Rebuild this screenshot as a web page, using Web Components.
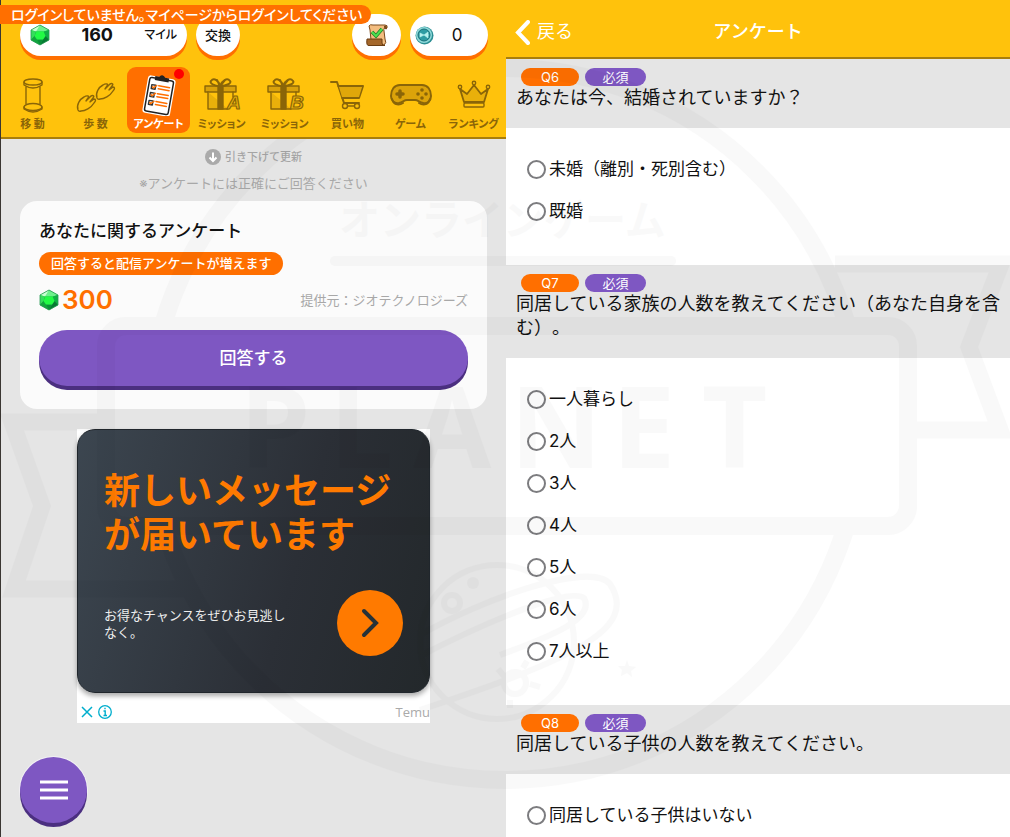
<!DOCTYPE html>
<html lang="ja">
<head>
<meta charset="utf-8">
<title>アンケート</title>
<style>
html,body{margin:0;padding:0}
body{font-family:Inter,"Noto Sans CJK JP",sans-serif;color:#111;background:#fff;text-spacing-trim:space-all;--yellow:#ffc20c;--edge:#a87e0c;--orange:#ff6f00;--purple:#7e57c2;--purple-dark:#4b2f80;--grey:#e5e5e5}
</style>
</head>
<body>
<survey-app></survey-app>

<template id="t-app">
<style>
:host{display:grid;grid-template-columns:506fr 504fr;position:relative;min-height:100vh;overflow:hidden}
.home{background:var(--grey);border-left:1px solid #3a3632;display:flex;flex-direction:column;min-width:0}
.form{background:#fff;min-width:0}
</style>
<section class="home">
  <home-header></home-header>
  <home-body></home-body>
</section>
<section class="form">
  <form-header>アンケート</form-header>
  <question-block number="Q6" options="未婚（離別・死別含む）|既婚">あなたは今、結婚されていますか？</question-block>
  <question-block number="Q7" options="一人暮らし|2人|3人|4人|5人|6人|7人以上">同居している家族の人数を教えてください（あなた自身を含む）。</question-block>
  <question-block number="Q8" options="同居している子供はいない" last>同居している子供の人数を教えてください。</question-block>
</section>
<brand-watermark></brand-watermark>
</template>

<template id="t-gem">
<style>:host{display:block;width:20px;height:22px}svg{display:block;width:100%;height:100%}</style>
<svg viewBox="0 0 20 22" aria-hidden="true">
<path d="M10 1L19 6V16L10 21L1 16V6Z" fill="#12b53a"/>
<path d="M10 1L19 6L14 7.500H6.500L1 6Z" fill="#6df08c"/><path d="M10 1L1 6L6 7.500Z" fill="#c9ffd2"/>
<path d="M1 6L6 7.500L4.500 12L1 16Z" fill="#35dd5b"/><path d="M19 6L14 7.500L15.500 12L19 16Z" fill="#0fb045"/>
<path d="M1 16L4.500 12L7 15.500L10 21Z" fill="#12a53d"/><path d="M19 16L15.500 12L13 15.500L10 21Z" fill="#077a33"/>
<path d="M7 15.500H13L10 21Z" fill="#0a8f38"/><path d="M6.500 7.500H13.500L15.500 12L13 15.500H7L4.500 12Z" fill="#22fa45"/>
<path d="M10 1L19 6V16L10 21L1 16V6Z" fill="none" stroke="#2a9a55" stroke-width=".8" stroke-linejoin="round"/>
</svg>
</template>

<template id="t-home-header">
<style>
:host{display:block;position:relative;background:var(--yellow);border-bottom:2px solid var(--edge);padding-top:14px}
.login{position:absolute;left:-1px;top:5px;z-index:1;background:var(--orange);color:#fff;font-size:14px;font-weight:500;line-height:19px;padding:0 9px 0 11px;border-radius:0 10px 10px 0;font-feature-settings:"palt";white-space:nowrap}
.pills{display:flex;padding:0 18px 0 19px;gap:9px;height:42px}
.pill{display:flex;align-items:center;justify-content:center;background:#fff;border:0;border-radius:22px;box-shadow:0 4px 0 var(--orange);font:500 13px/20px Inter,"Noto Sans CJK JP",sans-serif;color:#111;padding:0;box-sizing:border-box}
.miles{width:167px;justify-content:space-between;padding:0 10px}
.miles b{font-size:18px;font-weight:700}
.miles span{font-size:12px;font-feature-settings:"palt"}
.swap{width:44px}.task{width:49px;margin-left:auto}.coin{width:78px;justify-content:flex-start;padding-left:5px;font-size:17px}
.coin span{flex:1;text-align:center;font-weight:400;padding-right:8px}
nav{display:grid;grid-template-columns:repeat(8,63px);justify-content:start;padding:7px 0 4px}
</style>
<div class="login" role="status">ログインしていません。マイページからログインしてください</div>
<div class="pills">
  <div class="pill miles"><gem-icon></gem-icon><b>160</b><span>マイル</span></div>
  <button class="pill swap">交換</button>
  <button class="pill task" aria-label="達成リスト"><svg width="24" height="25" viewBox="0 0 24 25"><path d="M4 3Q5 1 8 2H20Q23 2 22 5Q18 4 19 8L20 16Q22 20 19 22H6V17L5 7Z" fill="#f3bd80" stroke="#7b4a1c"/><path d="M2 16H17V20Q17 23 20 22.500H4Q1 23 2 16Z" fill="#a4672b" stroke="#6b3d12"/><path d="M19 3Q22 1 22 6Q19 7 19 4Z" fill="#7b4a1c"/><path d="M7 9L11 13L17 6" fill="none" stroke="#1d7d27" stroke-width="3.500"/><path d="M7 9L11 13L17 6" fill="none" stroke="#4be04f" stroke-width="2"/></svg></button>
  <div class="pill coin"><svg width="19" height="19" viewBox="0 0 19 19"><circle cx="9.500" cy="9.500" r="9" fill="#2b8e93"/><circle cx="9" cy="9" r="8" fill="#8fd9da"/><circle cx="9" cy="9" r="6" fill="#2e9ca3" stroke="#176f78"/><path d="M5 7L9 9L5 11ZM9 9L13 6V12ZM11 9H14" fill="#b8f2ef" stroke="#b8f2ef" stroke-width=".6"/></svg><span>0</span></div>
</div>
<nav>
  <nav-tab icon="move">移 動</nav-tab>
  <nav-tab icon="steps">歩 数</nav-tab>
  <nav-tab icon="survey" active>アンケート</nav-tab>
  <nav-tab icon="giftA">ミッション</nav-tab>
  <nav-tab icon="giftB">ミッション</nav-tab>
  <nav-tab icon="cart">買い物</nav-tab>
  <nav-tab icon="game">ゲーム</nav-tab>
  <nav-tab icon="crown">ランキング</nav-tab>
</nav>
</template>

<template id="t-nav-tab">
<style>
:host{display:block;position:relative;margin-top:4px}
a{display:flex;flex-direction:column;align-items:center;color:#8a6508;text-decoration:none;border-radius:9px;height:66px;box-sizing:border-box;padding-top:7px}
svg{display:block;width:44px;height:42px}
.label{font-size:11px;font-weight:700;line-height:16px;font-feature-settings:"palt";white-space:nowrap}
:host([active]) a{background:var(--orange);color:#fff}
.dot{display:none;position:absolute;right:6px;top:2px;width:10px;height:10px;border-radius:50%;background:#f00}
:host([active]) .dot{display:block}
</style>
<a href="#"><svg viewBox="0 0 44 42" fill="none" stroke="#8a6508" stroke-width="1.400" stroke-linejoin="round" stroke-linecap="round" aria-hidden="true"></svg><span class="label"><slot></slot></span></a><i class="dot"></i>
</template>

<template id="t-home-body">
<style>
:host{display:flex;flex-direction:column;align-items:stretch;padding:8px 19px 9px}
.refresh{display:flex;align-items:center;justify-content:center;gap:4px;font-size:11px;font-weight:500;line-height:20px;color:#a5a5a5}
.refresh svg{display:block}
.note{margin:6px 0 8px;text-align:center;font-size:13px;font-weight:400;line-height:20px;color:#a8a8a8}
ad-banner{align-self:center;margin-top:20px}
menu-button{margin-top:34px}
</style>
<div class="refresh"><svg width="16" height="16" viewBox="0 0 16 16"><circle cx="8" cy="8" r="8" fill="#aaa"/><path d="M8 3.500V12M4.500 8.500L8 12L11.500 8.500" fill="none" stroke="#fff" stroke-width="2"/></svg>引き下げて更新</div>
<p class="note">※アンケートには正確にご回答ください</p>
<survey-card></survey-card>
<ad-banner></ad-banner>
<menu-button></menu-button>
</template>

<template id="t-survey-card">
<style>
:host{display:block;background:#fbfbfb;border-radius:17px;padding:17px 19px 19px}
h2{margin:0;font-size:17px;font-weight:500;line-height:26px}
.tag{display:inline-block;margin-top:8px;background:var(--orange);color:#fff;border-radius:12px;padding:0 12px;font-size:13px;font-weight:500;line-height:23px;vertical-align:top}
.row{display:flex;align-items:center;gap:3px;margin-top:9px;height:32px}
.points{font-size:26px;font-weight:600;line-height:32px;color:var(--orange)}
.by{margin-left:auto;font-size:13px;font-weight:400;line-height:20px;color:#a8a8a8}
button{display:block;width:100%;height:56px;margin:14px 0 4px;border:0;border-radius:28px;background:var(--purple);box-shadow:0 4px 0 var(--purple-dark);color:#fff;font:500 17px/24px Inter,"Noto Sans CJK JP",sans-serif}
</style>
<h2>あなたに関するアンケート</h2>
<span class="tag">回答すると配信アンケートが増えます</span>
<div class="row"><gem-icon></gem-icon><span class="points">300</span><span class="by">提供元：ジオテクノロジーズ</span></div>
<button>回答する</button>
</template>

<template id="t-ad">
<style>
:host{display:block;width:353px;background:#fff;font-family:"Noto Sans CJK JP",sans-serif}
.box{background:linear-gradient(105deg,#3c4650,#2b2f36 60%,#23282b);border-radius:18px;box-shadow:0 3px 5px #0005;padding:36px 26px;border:1px solid #20262c;box-sizing:border-box}
h3{margin:0;color:#ff7a00;font-size:36px;font-weight:700;line-height:44px;white-space:nowrap}
.cta{display:flex;justify-content:space-between;align-items:center;margin-top:36px}
p{margin:0;color:#eee;font-size:13px;line-height:17px;width:186px}
button{border:0;padding:0;width:66px;height:66px;border-radius:50%;background:#ff7a00}
button svg,.meta svg{display:block}
.meta{display:flex;align-items:center;height:30px;padding:8px 0 0 4px;gap:5px;box-sizing:border-box}
.meta button{width:auto;height:auto;background:none;border-radius:0}
.meta span{margin-left:auto;font:400 13px/20px "Open Sans",sans-serif;color:#aaa}
</style>
<div class="box">
  <h3>新しいメッセージ<br>が届いています</h3>
  <div class="cta"><p>お得なチャンスをぜひお見逃しなく。</p>
  <button aria-label="開く"><svg width="66" height="66" viewBox="0 0 66 66"><path d="M27 21L39 33L27 45" fill="none" stroke="#263238" stroke-width="4" stroke-linecap="round"/></svg></button></div>
</div>
<div class="meta">
  <button aria-label="閉じる"><svg width="12" height="12" viewBox="0 0 12 12"><path d="M1 1L11 11M11 1L1 11" stroke="#00aecd" stroke-width="1.500"/></svg></button>
  <button aria-label="広告について"><svg width="14" height="14" viewBox="0 0 14 14"><circle cx="7" cy="7" r="6.300" fill="none" stroke="#00aecd" stroke-width="1.300"/><path d="M5.500 6H7.200V10.500M5.500 10.500H9M6.300 3.500H7.700" fill="none" stroke="#00aecd" stroke-width="1.400"/></svg></button>
  <span>Temu</span>
</div>
</template>

<template id="t-menu">
<style>
:host{display:block}
button{display:grid;place-items:center;width:67px;height:66px;padding:0;border:0;border-radius:50%;background:var(--purple);box-shadow:0 4px 0 var(--purple-dark),0 0 0 1px #f2f0f5}
</style>
<button aria-label="メニュー"><svg width="28" height="20" viewBox="0 0 28 20"><path d="M0 2H28M0 10H28M0 18H28" stroke="#fff" stroke-width="3"/></svg></button>
</template>

<template id="t-form-header">
<style>
:host{display:grid;grid-template-columns:1fr auto 1fr;align-items:center;background:var(--yellow);border-bottom:2px solid var(--edge);padding:7px 9px 0;box-sizing:border-box;min-height:59px;color:#fff}
a{display:flex;align-items:center;gap:7px;color:#fff;text-decoration:none;font-size:18px;line-height:24px}
h1{margin:0;font-size:18px;font-weight:500;line-height:24px}
svg{display:block}
</style>
<a href="#"><svg width="15" height="25" viewBox="0 0 15 25"><path d="M13 2L3 12.500L13 23" fill="none" stroke="#fff" stroke-width="4" stroke-linecap="round"/></svg>戻る</a>
<h1><slot></slot></h1>
</template>

<template id="t-question">
<style>
:host{display:block}
fieldset{border:0;margin:0;padding:0;min-width:0}
legend{display:block;width:100%;box-sizing:border-box;background:var(--grey);padding:9px 6px 18px 10px;font-size:18px;line-height:24px}
.tags{display:flex;gap:6px;padding-left:5px}
.tags span{color:#fff;border-radius:9px;font-size:13px;line-height:18px;text-align:center;background:var(--orange);width:58px}
.tags .req{background:var(--purple);width:61px}
.list{padding:20px 21px 33px}
:host([last]) .list{padding-bottom:0}
label{display:flex;align-items:center;gap:3px;height:42px;font-size:17px;line-height:24px}
input{appearance:none;margin:0;width:19px;height:19px;border:2px solid #7c7c7f;border-radius:50%;background:#fff;flex:none}
input:checked{border-width:6px;border-color:var(--purple)}
</style>
<fieldset><legend><div class="tags"><span class="num"></span><span class="req">必須</span></div><slot></slot></legend><div class="list"></div></fieldset>
</template>

<template id="t-watermark">
<style>
:host{display:block;position:absolute;inset:0;pointer-events:none}
svg{display:block;width:100%;height:100%}
text{font-family:"Noto Sans","Noto Sans CJK JP",sans-serif;font-weight:700}
</style>
<svg viewBox="0 0 1010 837" preserveAspectRatio="xMidYMin meet" aria-hidden="true">
<defs><clipPath id="c"><path d="M0 139H506V59H1010V318H0ZM0 535H1010V837H0Z"/></clipPath></defs>
<g opacity=".018">
<circle cx="505" cy="424" r="356" fill="none" stroke="#000" stroke-width="18" clip-path="url(#c)"/>
<rect x="106" y="326" width="802" height="200" rx="20" fill="none" stroke="#000" stroke-width="18"/>
<path d="M835 264H1001L969 347L1000 430H917M97 422H12L42 506L14 589H185" fill="none" stroke="#000" stroke-width="17"/>
<path d="M335 261H671" stroke="#000" stroke-width="10" stroke-linecap="round"/>
<text x="339" y="235" font-size="41">オンラインゲーム</text>
<g font-size="113"><text x="240" y="468">P</text><text x="330" y="468">L</text><text x="413" y="468">A</text><text x="510" y="468">N</text><text x="612" y="468">E</text><text x="702" y="468">T</text></g>
<g fill="none" stroke="#000" stroke-width="6">
<circle cx="497" cy="642" r="77"/>
<path d="M420 635C480 600 590 560 610 584C640 630 570 660 420 710M420 656C490 620 570 587 584 598C595 618 555 635 500 655"/>
<circle cx="452" cy="603" r="8"/><circle cx="515" cy="683" r="11"/><path d="M498 669L504 676M523 668L527 661M530 684L540 687M510 700V708"/>
</g>
<circle cx="473" cy="583" r="6"/><path d="M627 660L629 666L636 667L631 671L632 677L627 673L621 676L622 670L618 666H625Z"/>
</g>
</svg>
</template>

<script>
const ICONS = {
move:'<ellipse cx="22" cy="8" rx="9" ry="3"/><path d="M13 8V11Q22 17 31 11V8M15 13V30M29 13V30"/><path d="M13 33V35Q22 41 31 35V33"/><ellipse cx="22" cy="33" rx="9" ry="3.500"/>',
steps:'<path d="M23 24C21 19 25 13 29 11C32 9 35 10 33 12L31 15L36 10C38 9 40 10 38 12L35 16L39 13C41 13 41 15 39 17C36 22 30 25 26 25Q24 26 23 24Z"/><path d="M4 36C2 31 6 25 10 23C13 21 16 22 14 24L12 27L17 22C19 21 21 22 19 24L16 28L20 25C22 25 22 27 20 29C17 34 11 37 7 37Q5 38 4 36Z"/>',
survey:'<g transform="rotate(10 22 22)" stroke="none"><rect x="8" y="3" width="28" height="38" rx="3" fill="#fff"/><rect x="10" y="5" width="24" height="34" rx="2" fill="#fff" stroke="#222" stroke-width="1.500"/><path d="M15 3H19Q22 -1 25 3H29V7H15Z" fill="#222"/><path d="M20 12H31M20 15H31M20 20H31M20 23H31M20 28H31M20 31H31" stroke="#ff6f00" stroke-width="1.500"/><path d="M13 12H17V16H13ZM13 20H17V24H13ZM13 28H17V32H13Z" fill="#fff" stroke="#333"/><path d="M14 14L15 15L18 12M14 22L15 23L18 20M14 30L15 31L18 28" stroke="#ff6f00" fill="none"/></g>',
gift:'<path d="M5 12H36V18H5Z" fill="#d9a10b"/><path d="M8 18V35H28M33 18V23" fill="#e9b00b"/><path d="M18 12H23V35H18Z" fill="#8a6508"/><path d="M20 12C14 12 9 9 11 7C14 3 19 7 20 12C22 7 27 3 30 7C32 9 27 12 20 12M17 6L20 12L25 6" stroke-width="2"/>',
cart:'<path d="M5 8H11L18 29H33M12 12H37L33 24H16" stroke-width="2"/><path d="M13 13H36L33 23H16Z" fill="#e0a70a" stroke="none"/><circle cx="19" cy="32" r="2.500"/><circle cx="31" cy="32" r="2.500"/><path d="M22 32H28"/>',
game:'<path d="M11 11H33C39 11 42 16 42 22C42 27 38 30 34 29C30 28 29 26 26 26H18C15 26 14 28 10 29C5 30 2 26 2 22C2 16 5 11 11 11Z" fill="#dca30a" stroke-width="2"/><path d="M3 25C5 32 11 31 14 29M41 25C39 32 33 31 30 29" stroke-width="2"/><path d="M11 17V23M8 20H14" stroke-width="3.500"/><g fill="#8a6508" stroke="none"><circle cx="33" cy="16" r="1.800"/><circle cx="29" cy="20" r="1.800"/><circle cx="37" cy="20" r="1.800"/><circle cx="33" cy="24" r="1.800"/></g>',
crown:'<path d="M12 28L8 15L15 20L22 11L29 20L36 15L32 28Z" fill="#e9b00b" stroke-width="1.800"/><circle cx="8" cy="13" r="1.700"/><circle cx="22" cy="9" r="1.700"/><circle cx="36" cy="13" r="1.700"/><rect x="12" y="29" width="20" height="4" rx="1"/>'
};
const LETTER = c => `<text x="27" y="35" font-family="Liberation Sans,sans-serif" font-size="19" font-weight="700" font-style="italic" fill="#e9b00b" stroke-width="1.200">${c}</text>`;
ICONS.giftA = ICONS.gift + LETTER('A');
ICONS.giftB = ICONS.gift + LETTER('B');

class Base extends HTMLElement {
  constructor() {
    super();
    this.attachShadow({ mode: 'open' }).append(document.getElementById(this.constructor.tpl).content.cloneNode(true));
  }
}
const define = (name, tpl, ready) => customElements.define(name, class extends Base {
  static tpl = tpl;
  connectedCallback() { if (ready) ready(this, this.shadowRoot); }
});
define('gem-icon', 't-gem');
define('nav-tab', 't-nav-tab', (el, root) => {
  root.querySelector('svg').innerHTML = ICONS[el.getAttribute('icon')];
});
define('home-header', 't-home-header');
define('survey-card', 't-survey-card');
define('ad-banner', 't-ad');
define('menu-button', 't-menu');
define('home-body', 't-home-body');
define('form-header', 't-form-header');
define('question-block', 't-question', (el, root) => {
  const number = el.getAttribute('number');
  root.querySelector('.num').textContent = number;
  root.querySelector('.list').replaceChildren(...el.getAttribute('options').split('|').map(text => {
    const label = document.createElement('label');
    const input = document.createElement('input');
    input.type = 'radio';
    input.name = number;
    input.value = text;
    label.append(input, text);
    return label;
  }));
});
define('brand-watermark', 't-watermark');
define('survey-app', 't-app');
</script>
</body>
</html>
